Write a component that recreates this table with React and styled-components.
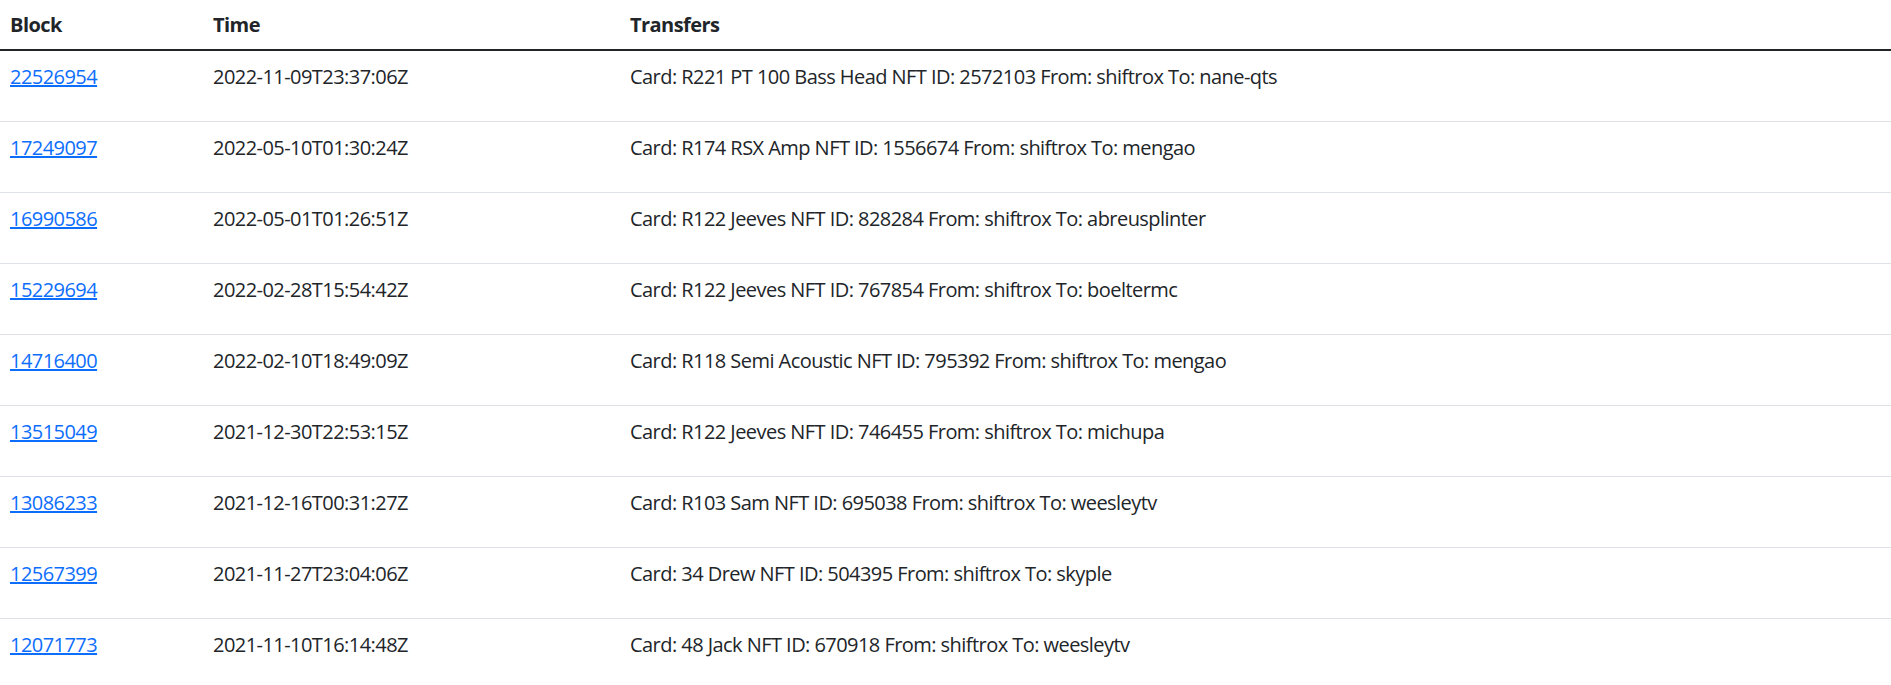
import React from 'react';
import styled, { createGlobalStyle } from 'styled-components';

const GlobalStyle = createGlobalStyle`
  html, body {
    margin: 0;
    padding: 0;
    background: #fff;
  }
  body {
    font-family: 'Segoe UI', 'Open Sans', 'Noto Sans', sans-serif;
    font-size: 20px;
    line-height: 1.5;
    letter-spacing: -0.55px;
    color: #212529;
  }
`

const StyledTable = styled.table`
  width: 100%;
  border-collapse: collapse;
  color: #212529;
  table-layout: fixed;
`

const StyledHeadCell = styled.th`
  box-sizing: border-box;
  text-align: left;
  font-weight: 700;
  padding: 10px 10px 9px;
  border-bottom: 2px solid #212529;
  width: ${props => props.colWidth || 'auto'};
`

const StyledRow = styled.tr`
  border-bottom: 1px solid #dee2e6;
`

const StyledCell = styled.td`
  padding: 11px 10px 9px;
  vertical-align: top;
`

const StyledText = styled.p`
  margin: 0 0 20px;
`

const StyledLink = styled.a`
  color: #0d6efd;
  text-decoration: underline;
`

const transfers = [
  ['22526954', '2022-11-09T23:37:06Z', 'Card: R221 PT 100 Bass Head NFT ID: 2572103 From: shiftrox To: nane-qts'],
  ['17249097', '2022-05-10T01:30:24Z', 'Card: R174 RSX Amp NFT ID: 1556674 From: shiftrox To: mengao'],
  ['16990586', '2022-05-01T01:26:51Z', 'Card: R122 Jeeves NFT ID: 828284 From: shiftrox To: abreusplinter'],
  ['15229694', '2022-02-28T15:54:42Z', 'Card: R122 Jeeves NFT ID: 767854 From: shiftrox To: boeltermc'],
  ['14716400', '2022-02-10T18:49:09Z', 'Card: R118 Semi Acoustic NFT ID: 795392 From: shiftrox To: mengao'],
  ['13515049', '2021-12-30T22:53:15Z', 'Card: R122 Jeeves NFT ID: 746455 From: shiftrox To: michupa'],
  ['13086233', '2021-12-16T00:31:27Z', 'Card: R103 Sam NFT ID: 695038 From: shiftrox To: weesleytv'],
  ['12567399', '2021-11-27T23:04:06Z', 'Card: 34 Drew NFT ID: 504395 From: shiftrox To: skyple'],
  ['12071773', '2021-11-10T16:14:48Z', 'Card: 48 Jack NFT ID: 670918 From: shiftrox To: weesleytv'],
]

const App = () => {
  return (
    <>
      <GlobalStyle />
      <StyledTable>
        <thead>
          <tr>
            <StyledHeadCell colWidth="203px">Block</StyledHeadCell>
            <StyledHeadCell colWidth="417px">Time</StyledHeadCell>
            <StyledHeadCell>Transfers</StyledHeadCell>
          </tr>
        </thead>
        <tbody>
          {transfers.map(([block, time, text]) => (
            <StyledRow key={block}>
              <StyledCell>
                <StyledText><StyledLink href="#">{block}</StyledLink></StyledText>
              </StyledCell>
              <StyledCell>
                <StyledText>{time}</StyledText>
              </StyledCell>
              <StyledCell>
                <StyledText>{text}</StyledText>
              </StyledCell>
            </StyledRow>
          ))}
        </tbody>
      </StyledTable>
    </>
  )
}

export default App;
